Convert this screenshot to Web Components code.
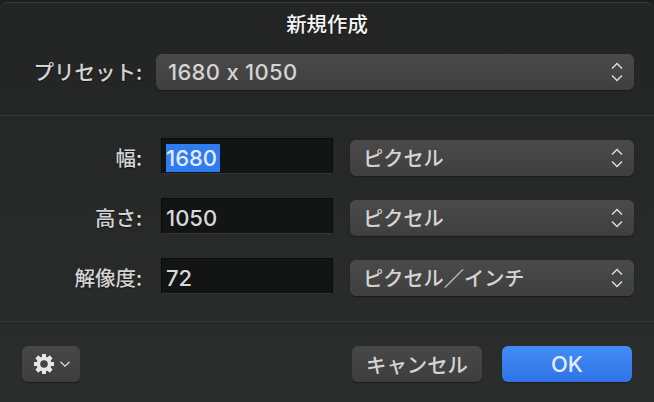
<!DOCTYPE html>
<html lang="ja">
<head>
<meta charset="utf-8">
<style>
  html, body { margin: 0; height: 100%; background: #1d1e1e; }
  body {
    font-family: "Noto Sans CJK JP", "Liberation Sans", sans-serif;
    color: #d6d6d6;
  }
</style>
</head>
<body>

<new-dialog>
  <span slot="title">新規作成</span>
  <form-row slot="preset" preset label="プリセット:">
    <select-box wide>1680 x 1050</select-box>
  </form-row>
  <form-row label="幅:">
    <text-field selected>1680</text-field>
    <select-box>ピクセル</select-box>
  </form-row>
  <form-row label="高さ:">
    <text-field>1050</text-field>
    <select-box>ピクセル</select-box>
  </form-row>
  <form-row label="解像度:">
    <text-field>72</text-field>
    <select-box>ピクセル／インチ</select-box>
  </form-row>
  <gear-button slot="gear"></gear-button>
  <push-button slot="actions">キャンセル</push-button>
  <push-button slot="actions" primary>OK</push-button>
</new-dialog>

<script>
class NewDialog extends HTMLElement {
  constructor () {
    super()
    this.shadow = this.attachShadow({ mode: 'open' })
  }

  connectedCallback () {
    this.shadow.innerHTML =
    /*html*/`
    <style>
      :host {
        display: flex;
        flex-direction: column;
        box-sizing: border-box;
        width: 654px;
        height: 402px;
        padding-top: 2px;
      }
      .window {
        flex: 1;
        display: flex;
        flex-direction: column;
        border-radius: 8px 8px 0 0;
        border-top: 1px solid #3a3b3b;
        background: linear-gradient(#232424, #2b2c2c);
      }
      .title {
        box-sizing: border-box;
        height: 51px;
        display: flex;
        justify-content: center;
        align-items: center;
        padding-bottom: 12px;
        font-size: 20.4px;
        font-weight: 500;
        color: #f6f6f6;
        text-shadow: 0 1px 1px rgba(0, 0, 0, .5);
      }
      .preset {
        display: block;
        height: 61px;
        border-bottom: 1px solid #353636;
      }
      .rows {
        display: flex;
        flex-direction: column;
        gap: 24px;
        height: 206px;
        box-sizing: border-box;
        padding-top: 22px;
        border-bottom: 1px solid #353636;
      }
      .footer {
        display: flex;
        justify-content: space-between;
        padding: 24px 22px 0;
      }
      .actions {
        display: flex;
        gap: 20px;
      }
    </style>
    <section class="window">
      <header class="title"><slot name="title"></slot></header>
      <div class="preset"><slot name="preset"></slot></div>
      <div class="rows"><slot></slot></div>
      <footer class="footer">
        <slot name="gear"></slot>
        <div class="actions"><slot name="actions"></slot></div>
      </footer>
    </section>
    `
  }
}

class FormRow extends HTMLElement {
  constructor () {
    super()
    this.shadow = this.attachShadow({ mode: 'open' })
  }

  connectedCallback () {
    this.shadow.innerHTML =
    /*html*/`
    <style>
      :host {
        display: grid;
        grid-template-columns: 142px 1fr;
        height: 36px;
      }
      label {
        text-align: right;
        white-space: nowrap;
        font-size: 20.5px;
        font-weight: 500;
        line-height: 38px;
        color: #d4d4d4;
        text-shadow: 0 1px 1px rgba(0, 0, 0, .5);
      }
      :host([preset]) label {
        line-height: 34px;
      }
      .fields {
        display: flex;
        gap: 17px;
        padding: 0 20px 0 19px;
      }
      :host([preset]) .fields {
        padding-left: 14px;
      }
    </style>
    <label>${this.getAttribute('label')}</label>
    <div class="fields"><slot></slot></div>
    `
  }
}

class TextField extends HTMLElement {
  constructor () {
    super()
    this.shadow = this.attachShadow({ mode: 'open' })
  }

  connectedCallback () {
    this.shadow.innerHTML =
    /*html*/`
    <style>
      :host {
        display: block;
        box-sizing: border-box;
        flex: 0 0 172px;
        height: 36px;
        padding-left: 4px;
        background: #131414;
        border: 1px solid #0b0b0b;
        border-bottom-color: #333434;
        font: 500 22px/38px Inter, "Liberation Sans", sans-serif;
        color: #d8d8d8;
      }
      .selected {
        display: inline-block;
        height: 28px;
        line-height: 28px;
        margin-top: 5px;
        padding-right: 3px;
        vertical-align: top;
        background: #2f7bf0;
        color: #e4ecfb;
      }
    </style>
    <span class="${this.hasAttribute('selected') ? 'selected' : ''}"><slot></slot></span>
    `
  }
}

class SelectBox extends HTMLElement {
  constructor () {
    super()
    this.shadow = this.attachShadow({ mode: 'open' })
  }

  connectedCallback () {
    this.shadow.innerHTML =
    /*html*/`
    <style>
      :host {
        flex: 1;
        display: flex;
        align-items: center;
        justify-content: space-between;
        box-sizing: border-box;
        height: 36px;
        margin-top: 2px;
        padding: 0 11px 0 13px;
        border-radius: 6px;
        background: linear-gradient(#4a4a4a, #3f3f3f);
        box-shadow: 0 1px 1px #1a1a1a;
        font-size: 20.2px;
        font-weight: 500;
        color: #d4d4d4;
      }
      :host([wide]) {
        margin-top: 0;
        padding-left: 12px;
        font: 500 22px Inter, "Liberation Sans", sans-serif;
        font-feature-settings: "calt" 0;
        letter-spacing: .3px;
      }
      span { padding-bottom: 2px; }
      :host([wide]) span { padding-bottom: 0; }
      svg { display: block; }
    </style>
    <span><slot></slot></span>
    <svg width="12" height="20" viewBox="0 0 12 20" fill="none" stroke="#dcdcdc" stroke-width="1.5">
      <path d="M1 6.500 6 1.500l5 5M1 13.500l5 5 5-5"/>
    </svg>
    `
  }
}

class PushButton extends HTMLElement {
  constructor () {
    super()
    this.shadow = this.attachShadow({ mode: 'open' })
  }

  connectedCallback () {
    this.shadow.innerHTML =
    /*html*/`
    <style>
      :host {
        display: flex;
        align-items: center;
        justify-content: center;
        width: 130px;
        height: 36px;
        border-radius: 6px;
        background: linear-gradient(#474747, #3e3e3e);
        box-shadow: 0 1px 1px #1c1c1c;
        font-size: 20.4px;
        font-weight: 500;
        color: #d4d4d4;
      }
      :host([primary]) {
        background: linear-gradient(#438cf5, #2f74e6);
        font: 500 22px Inter, "Liberation Sans", sans-serif;
        color: #e4ecfb;
      }
    </style>
    <slot></slot>
    `
  }
}

class GearButton extends HTMLElement {
  constructor () {
    super()
    this.shadow = this.attachShadow({ mode: 'open' })
  }

  connectedCallback () {
    const teeth = [0, 45, 90, 135, 180, 225, 270, 315]
      .map(angle => `<rect x="8" y="0" width="4" height="20" rx="0.500" transform="rotate(${angle} 10 10)"/>`)
      .join('')

    this.shadow.innerHTML =
    /*html*/`
    <style>
      :host {
        display: flex;
        align-items: center;
        gap: 6px;
        box-sizing: border-box;
        width: 58px;
        height: 36px;
        padding-left: 12px;
        border-radius: 6px;
        background: linear-gradient(#474747, #3e3e3e);
        box-shadow: 0 1px 1px #1c1c1c;
      }
      svg { display: block; }
    </style>
    <svg width="20" height="20" viewBox="0 0 20 20">
      <g fill="#e6e6e6">${teeth}<circle cx="10" cy="10" r="7.500"/></g>
      <circle cx="10" cy="10" r="3.800" fill="#434343"/>
    </svg>
    <svg width="10" height="6" viewBox="0 0 10 6" fill="none" stroke="#d8d8d8" stroke-width="1.300">
      <path d="M.5.800 5 5.200 9.500.800"/>
    </svg>
    `
  }
}

customElements.define('new-dialog', NewDialog)
customElements.define('form-row', FormRow)
customElements.define('text-field', TextField)
customElements.define('select-box', SelectBox)
customElements.define('push-button', PushButton)
customElements.define('gear-button', GearButton)
</script>
</body>
</html>
